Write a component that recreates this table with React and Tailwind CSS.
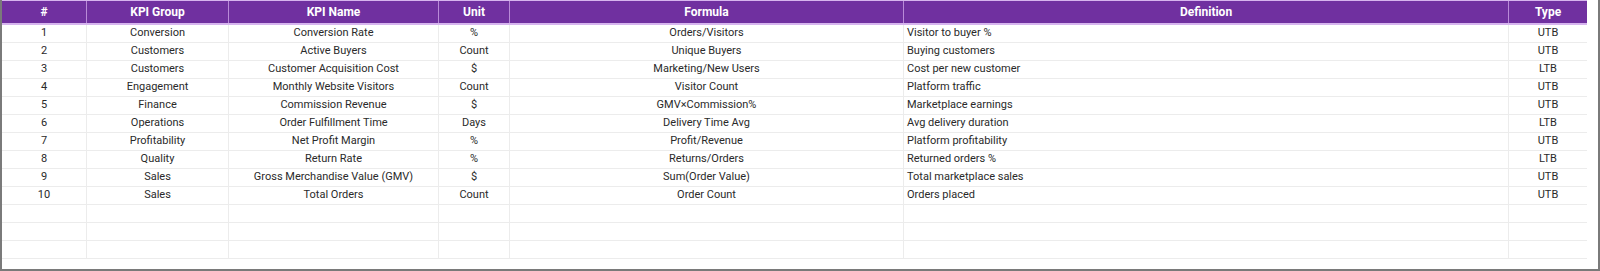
import React from "react";

const rows = [
  ["1", "Conversion", "Conversion Rate", "%", "Orders/Visitors", "Visitor to buyer %", "UTB"],
  ["2", "Customers", "Active Buyers", "Count", "Unique Buyers", "Buying customers", "UTB"],
  ["3", "Customers", "Customer Acquisition Cost", "$", "Marketing/New Users", "Cost per new customer", "LTB"],
  ["4", "Engagement", "Monthly Website Visitors", "Count", "Visitor Count", "Platform traffic", "UTB"],
  ["5", "Finance", "Commission Revenue", "$", "GMV×Commission%", "Marketplace earnings", "UTB"],
  ["6", "Operations", "Order Fulfillment Time", "Days", "Delivery Time Avg", "Avg delivery duration", "LTB"],
  ["7", "Profitability", "Net Profit Margin", "%", "Profit/Revenue", "Platform profitability", "UTB"],
  ["8", "Quality", "Return Rate", "%", "Returns/Orders", "Returned orders %", "LTB"],
  ["9", "Sales", "Gross Merchandise Value (GMV)", "$", "Sum(Order Value)", "Total marketplace sales", "UTB"],
  ["10", "Sales", "Total Orders", "Count", "Order Count", "Orders placed", "UTB"],
  ["", "", "", "", "", "", ""],
  ["", "", "", "", "", "", ""],
  ["", "", "", "", "", "", ""],
];

const headers = ["#", "KPI Group", "KPI Name", "Unit", "Formula", "Definition", "Type"];
const cols = "grid grid-cols-[85px_142px_210px_71px_394px_605px_78px]";

export default function App() {
  return (
    <div className="h-[271px] w-[1600px] bg-white border-l-2 border-r-2 border-b-2 border-[#7a7a7a] font-['Roboto',sans-serif]">
      <div className="w-[1585px]">
        {/* Header */}
        <div className={`${cols} h-[25px] bg-[#7030a0] border-t border-b-2 border-[#d6b4ee]`}>
          {headers.map((h, i) => (
            <div
              key={h}
              className={`flex items-center justify-center text-white font-bold text-[12px] ${i < 6 ? "border-r border-[#b98ad8]" : ""}`}
            >
              {h}
            </div>
          ))}
        </div>

        {/* Body */}
        {rows.map((r, ri) => (
          <div key={ri} className={`${cols} h-[18px] border-b border-[#ececec]`}>
            {r.map((c, ci) => (
              <div
                key={ci}
                className={`flex items-center text-[11px] text-[#2a2a2a] ${ci === 5 ? "justify-start pl-[3px]" : "justify-center"} ${ci < 6 ? "border-r border-[#ececec]" : ""}`}
              >
                {c}
              </div>
            ))}
          </div>
        ))}
      </div>
    </div>
  );
}
